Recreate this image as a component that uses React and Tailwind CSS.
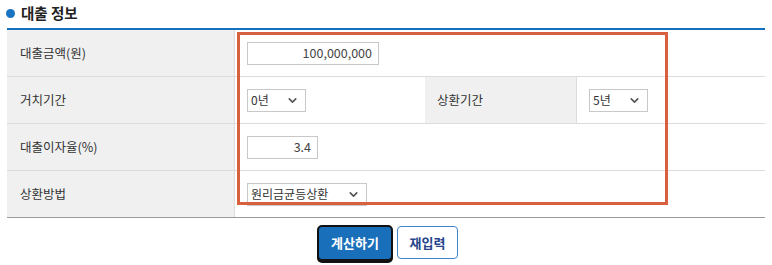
import React from "react";
import { ChevronDown } from "lucide-react";

const font = { fontFamily: '"Noto Sans CJK KR", "Noto Sans", sans-serif' };

const Select = ({ value, width }) => (
	<div
		className={`flex items-center justify-between h-[23px] border border-[#c8c8c8] bg-white pl-[3px] pr-[6px] text-[12px] text-[#333] ${width}`}
	>
		<span>{value}</span>
		<ChevronDown size={13} strokeWidth={3} className="text-[#555]" />
	</div>
);

const Input = ({ value, width }) => (
	<div
		className={`flex items-center justify-end h-[23px] border border-[#c8c8c8] bg-white pr-[6px] text-[12.5px] text-[#444] ${width}`}
	>
		{value}
	</div>
);

const Label = ({ children }) => (
	<div className="flex items-center bg-[#f0f0f0] pl-[13px] text-[12.5px] text-[#333] border-r border-[#dcdcdc]">
		{children}
	</div>
);

const Value = ({ children, span }) => (
	<div className={`flex items-center pl-[12px] bg-white ${span}`}>{children}</div>
);

export default function App() {
	return (
		<div className="w-[772px] h-[265px] bg-white relative" style={font}>
			<div className="flex items-center gap-[6px] h-[28px] pl-[6px] pb-[2px]">
				<span className="w-[9px] h-[9px] rounded-full bg-[#1874c0]" />
				<span className="text-[14.5px] font-bold text-[#222]">대출 정보</span>
			</div>
			<div className="mx-[7px] border-t-2 border-[#1270bf] border-b border-b-[#9a9a9a]">
				<div className="grid grid-cols-[228px_190px_152px_1fr] h-[47px] border-b border-[#dcdcdc]">
					<Label>대출금액(원)</Label>
					<Value span="col-span-3">
						<Input value="100,000,000" width="w-[132px]" />
					</Value>
				</div>
				<div className="grid grid-cols-[228px_190px_152px_1fr] h-[47px] border-b border-[#dcdcdc]">
					<Label>거치기간</Label>
					<Value>
						<Select value="0년" width="w-[59px]" />
					</Value>
					<div className="flex items-center bg-[#f0f0f0] pl-[12px] text-[12.5px] text-[#333] border-r border-[#dcdcdc]">
						상환기간
					</div>
					<Value>
						<Select value="5년" width="w-[59px]" />
					</Value>
				</div>
				<div className="grid grid-cols-[228px_190px_152px_1fr] h-[47px] border-b border-[#dcdcdc]">
					<Label>대출이자율(%)</Label>
					<Value span="col-span-3">
						<Input value="3.4" width="w-[71px]" />
					</Value>
				</div>
				<div className="grid grid-cols-[228px_190px_152px_1fr] h-[46px]">
					<Label>상환방법</Label>
					<Value span="col-span-3">
						<Select value="원리금균등상환" width="w-[120px]" />
					</Value>
				</div>
			</div>
			<div className="flex justify-center gap-[4px] pt-[7px] pl-[3px]">
				<button
					type="button"
					className="w-[76px] h-[36px] rounded-[5px] border-2 border-[#111] bg-[#1a6fba] text-white text-[13px] font-bold shadow-[0_2px_0_#111]"
				>
					계산하기
				</button>
				<button
					type="button"
					className="w-[61px] h-[33px] mt-[1px] rounded-[4px] border border-[#3f86cc] bg-white text-[#27448c] text-[13px] font-bold"
				>
					재입력
				</button>
			</div>
			<div className="absolute left-[237px] top-[32px] w-[431px] h-[173px] border-[3px] border-[#d8603f] pointer-events-none" />
		</div>
	);
}
